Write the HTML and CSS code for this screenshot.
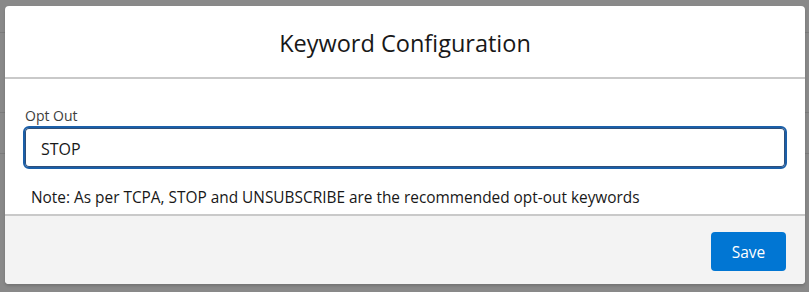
FILE: index.html
```html
<!DOCTYPE html>
<html lang="en">
<head>
    <meta charset="UTF-8">
    <title>Keyword Configuration</title>
    <link rel="stylesheet" href="styles.css">
</head>
<body>

    <div class="modal">
        <div class="modal-header">
            <h2>Keyword Configuration</h2>
        </div>
        <div class="modal-body">
            <label class="field-label" for="optOut">Opt Out</label>
            <input class="field-input" id="optOut" type="text" value="STOP">
            <p class="note">Note: As per TCPA, STOP and UNSUBSCRIBE are the recommended opt-out keywords</p>
        </div>
        <div class="modal-footer">
            <button class="btn-save">Save</button>
        </div>
    </div>

</body>
</html>
```

FILE: styles.css
```css
body {
    margin: 0; padding: 6px 4px 8px 5px; height: 292px; box-sizing: border-box;
    font-family: "Open Sans", "Noto Sans", sans-serif; color: #181818;
    background-color: #898989;
    background-image:
        linear-gradient(#7b7b7b, #7b7b7b),
        linear-gradient(#7b7b7b, #7b7b7b),
        linear-gradient(#7b7b7b, #7b7b7b);
    background-size: 100% 1px;
    background-repeat: no-repeat;
    background-position: 0 32px, 0 112px, 0 153px;
}
.modal { background: white; border-radius: 4px; display: flex; flex-direction: column; height: 278px; box-shadow: 0 2px 3px rgba(0, 0, 0, 0.16); }
.modal-header { height: 71px; display: flex; align-items: center; justify-content: center; border-bottom: 2px solid #c9c9c9; }
.modal-header h2 { margin: 0; font-size: 23.5px; font-weight: normal; padding-top: 2px; }
.modal-body { padding: 28px 18px 0 18px; height: 135px; box-sizing: border-box; }
.field-label { display: block; font-size: 14px; color: #3e3e3c; line-height: 18px; margin-left: 2px; }
.field-input {
    display: block; width: 100%; height: 43px; box-sizing: border-box; margin-top: 1px;
    border: 2px solid #1b5fa8; border-radius: 6px; box-shadow: inset 0 0 0 1px #2e4f7a;
    padding: 3px 16px 0 16px; font-family: inherit; font-size: 16px; color: #181818; outline: none;
}
.note { margin: 19px 0 0 8px; font-size: 15.4px; line-height: 20px; }
.modal-footer {
    flex: 1; background: #f3f3f3; border-top: 2px solid #c9c9c9; border-radius: 0 0 4px 4px;
    display: flex; align-items: center; justify-content: flex-end; padding: 0 19px 0 0;
}
.btn-save {
    width: 75px; height: 39px; background: #0176d3; color: white; border: none; border-radius: 4px;
    font-family: inherit; font-size: 15.5px; cursor: pointer; margin-top: 3px;
}
```
